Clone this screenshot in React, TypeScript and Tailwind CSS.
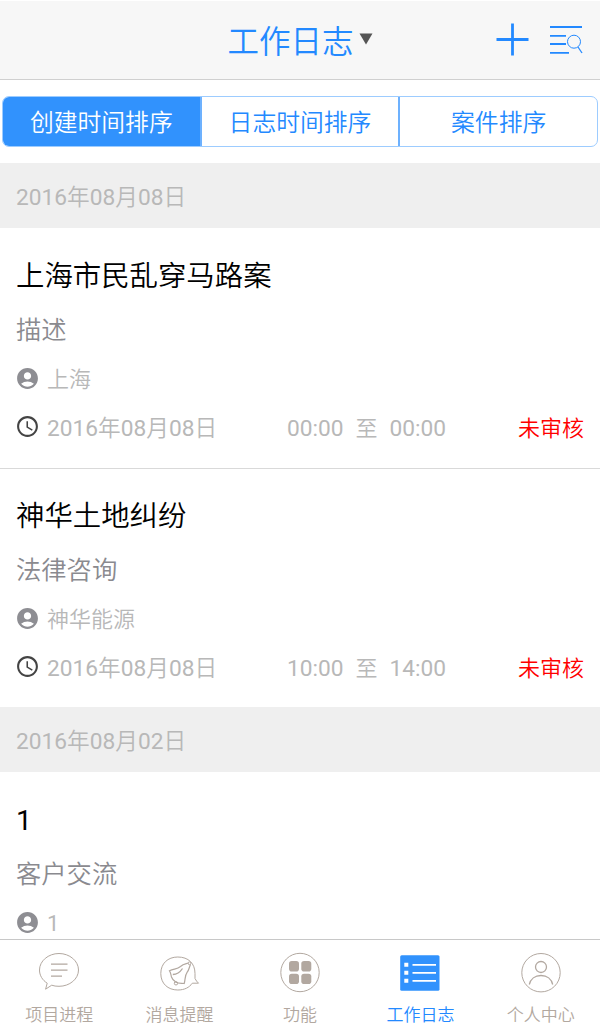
import type { ReactNode } from "react"
import { MdAccessTime, MdAccountCircle } from "react-icons/md"

type Log = {
  title: string
  desc: string
  client: string
  date?: string
  from?: string
  to?: string
  status?: string
}

const sorts = ["创建时间排序", "日志时间排序", "案件排序"]

const groups: { date: string; logs: Log[] }[] = [
  {
    date: "2016年08月08日",
    logs: [
      { title: "上海市民乱穿马路案", desc: "描述", client: "上海", date: "2016年08月08日", from: "00:00", to: "00:00", status: "未审核" },
      { title: "神华土地纠纷", desc: "法律咨询", client: "神华能源", date: "2016年08月08日", from: "10:00", to: "14:00", status: "未审核" },
    ],
  },
  {
    date: "2016年08月02日",
    logs: [{ title: "1", desc: "客户交流", client: "1" }],
  },
]

const ProgressIcon = () => (
  <svg width="42" height="42" viewBox="0 0 42 42" fill="none" stroke="currentColor">
    <path d="M9.2 31.2C4.5 28.2 1.5 23.5 1.5 18C1.5 9 10.3 1.5 21 1.5S40.5 9 40.5 18S31.7 34.3 21 34.3C18.2 34.3 15.8 34 13.7 33.2L7.6 37.2Z" strokeWidth="1" />
    <path d="M13 12.2H29.500M13 18.2H29.500M13 24.2H24" strokeWidth="1.300" />
  </svg>
)

const BellIcon = () => (
  <svg width="42" height="42" viewBox="0 0 42 42" fill="none" stroke="currentColor">
    <path d="M36 26.500C37 28.500 38 29.800 39.500 31.200H33.300C30.300 35.500 25.500 38 18.800 38C8.800 38 1.800 31.500 1.800 21.500S8.800 5 18.800 5C29.500 5 36 11.500 36 21.500Z" strokeWidth="1" />
    <path d="M29.500 11C26.500 12 24.500 11.800 21.500 14.500C18 17.500 14.500 16.500 10.500 18.800C11.800 20.500 11.800 22.500 12.500 25C13.200 27.300 15 29 17 30.200C20 31.800 23 31 25.200 31.500C26.500 27.500 25.500 24 28.200 20.200C30.300 17.500 30 15.500 31.500 12.500" strokeWidth="1.200" />
    <circle cx="30.500" cy="11.300" r="1.400" strokeWidth="1" />
    <circle cx="17" cy="31.300" r="1.700" strokeWidth="1" />
    <path d="M13.800 22.500C18 22.500 21.500 19.500 23.500 16.500" strokeWidth="1.300" />
  </svg>
)

const GridIcon = () => (
  <svg width="42" height="42" viewBox="0 0 42 42">
    <circle cx="21" cy="20.500" r="19.200" fill="none" stroke="currentColor" />
    <g fill="currentColor">
      <rect x="10" y="9" width="10" height="10.500" rx="2.800" />
      <rect x="22.300" y="9" width="10" height="10.500" rx="2.800" />
      <rect x="10" y="21.700" width="10" height="10.300" rx="2.800" />
      <rect x="22.300" y="21.700" width="10" height="10.300" rx="2.800" />
    </g>
  </svg>
)

const LogIcon = () => (
  <svg width="42" height="42" viewBox="0 0 42 42">
    <rect x="1.200" y="3.300" width="39.300" height="35.500" rx="1.500" fill="#3192fd" />
    <path d="M5.300 10.700h4v4h-4zM5.300 18.700h4v4h-4zM5.300 26.700h4v4h-4z" fill="#fff" />
    <path d="M13.500 12.900H37M13.500 20.900H37M13.500 28.900H37" stroke="#fff" strokeWidth="1.800" />
  </svg>
)

const UserIcon = () => (
  <svg width="42" height="42" viewBox="0 0 42 42" fill="none" stroke="currentColor">
    <circle cx="21" cy="20.700" r="19.200" strokeWidth="1" />
    <circle cx="21" cy="15" r="5.500" strokeWidth="1.300" />
    <path d="M9.300 32.500C10.500 27 15 23.500 21 23.500S31.500 27 32.700 32.500" strokeWidth="1.300" />
  </svg>
)

const tabs: { label: string; icon: ReactNode; active?: boolean }[] = [
  { label: "项目进程", icon: <ProgressIcon /> },
  { label: "消息提醒", icon: <BellIcon /> },
  { label: "功能", icon: <GridIcon /> },
  { label: "工作日志", icon: <LogIcon />, active: true },
  { label: "个人中心", icon: <UserIcon /> },
]

const LogItem = ({ log }: { log: Log }) => (
  <div className="h-[240px] px-4 pt-[29px] not-first:h-[239px] [&+&]:pt-7 border-[#d9d9d9] [&+&]:border-t">
    <h2 className="h-10 text-[28.4px] leading-10 text-black">{log.title}</h2>
    <p className="mt-4 h-9 text-[25.3px] leading-9 text-[#8a8a8f]">{log.desc}</p>
    <div className="mt-[15px] flex h-8 items-center text-[22px] leading-8 text-[#b8b8b8]">
      <MdAccountCircle className="-ml-px -mt-[3px] mr-[7px] size-[25px] text-[#8e8e93]" />
      <span>{log.client}</span>
    </div>
    {log.date && (
      <div className="mt-4 flex h-8 items-center text-[22.7px] leading-8 text-[#b8b8b8]">
        <MdAccessTime className="-ml-px -mt-[3px] mr-[7px] size-[25px] text-[#444]" />
        <span className="w-[240px] pt-0.5">{log.date}</span>
        <span className="pt-0.5">{log.from}</span>
        <span className="mx-3 pt-px text-[22px]">至</span>
        <span className="pt-0.5">{log.to}</span>
        <span className="ml-auto pt-px text-[22px] text-[#f00]">{log.status}</span>
      </div>
    )}
  </div>
)

const App = () => {
  return (
    <div className="flex h-[1024px] w-[600px] flex-col overflow-hidden bg-white font-[Roboto,'Noto_Sans_CJK_SC_DemiLight','Noto_Sans_CJK_SC',sans-serif]">
      <header className="grid h-20 shrink-0 grid-cols-[1fr_auto_1fr] items-center border-b border-t border-b-[#d0d0d0] border-t-white bg-[#f7f7f7]">
        <div />
        <div className="flex items-center text-[31.5px] leading-10 text-[#2389ff]">
          <h1 className="pt-1.5">工作日志</h1>
          <svg className="ml-[5px] mt-[-3px]" width="14" height="12" viewBox="0 0 14 12">
            <path d="M.5.5H13.5L7 11.500Z" fill="#555" />
          </svg>
        </div>
        <div className="flex items-center justify-end gap-5 pr-[17px]">
          <svg width="34" height="34" viewBox="0 0 34 34" stroke="#2389ff" strokeWidth="2.800">
            <path d="M1.500 16.500H33.500M17.500 .5V32.500" />
          </svg>
          <svg width="34" height="34" viewBox="0 0 34 34" fill="none" stroke="#2389ff">
            <path d="M1 4H33M1 12.800H17M1 21H17M1 29.800H20" strokeWidth="1.800" />
            <circle cx="25" cy="18.700" r="6.500" />
            <path d="M29 24L33 30" strokeWidth="1.300" />
          </svg>
        </div>
      </header>

      <div className="h-[83px] shrink-0 px-0.5 pt-4">
        <div className="flex h-[51px] overflow-hidden rounded-[7px] border-[1.5px] border-[#9dccff]">
          {sorts.map((s, i) => (
            <button
              key={s}
              className={`flex flex-1 items-center justify-center pt-[3px] text-[23.800px] leading-8 ${
                i === 0 ? "bg-[#3192fd] text-white" : "border-l-2 border-[#6db1fe] text-[#2389ff]"
              }`}
            >
              {s}
            </button>
          ))}
        </div>
      </div>

      <main className="min-h-0 flex-1 overflow-hidden">
        {groups.map((g) => (
          <section key={g.date}>
            <div className="flex h-[65px] items-center bg-[#efefef] px-4 pt-1.5 text-[22.7px] text-[#b8b8b8]">{g.date}</div>
            <div>
              {g.logs.map((log) => (
                <LogItem key={log.title} log={log} />
              ))}
            </div>
          </section>
        ))}
      </main>

      <nav className="-mx-px grid h-[85px] shrink-0 grid-cols-5 border-t border-[#c8c8c8] bg-white">
        {tabs.map((t) => (
          <div key={t.label} className={`flex flex-col items-center pt-3 ${t.active ? "text-[#2389ff]" : "text-[#b2a8a0]"}`}>
            {t.icon}
            <span className="mt-[9px] text-[17px] leading-6">{t.label}</span>
          </div>
        ))}
      </nav>
    </div>
  )
}

export default App
